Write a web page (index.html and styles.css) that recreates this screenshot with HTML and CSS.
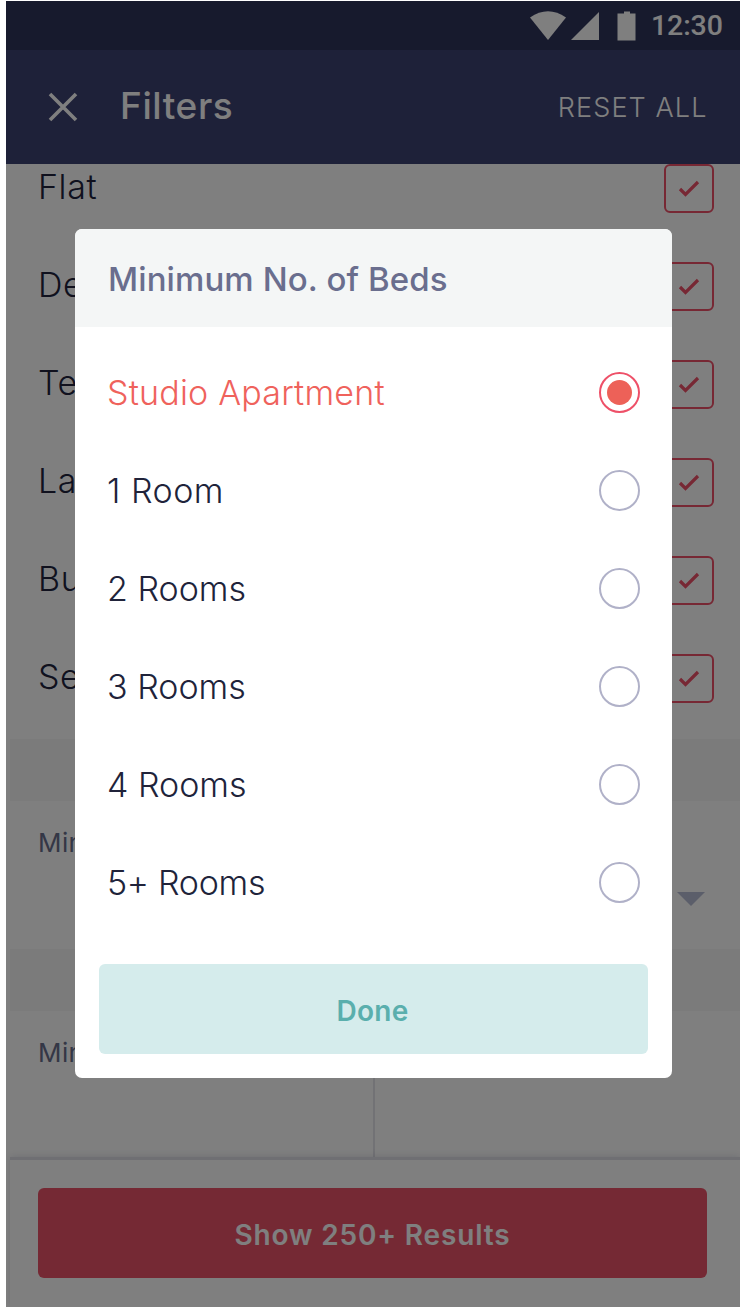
FILE: index.html
```html
<!DOCTYPE html>
<html lang="en">
<head>
<meta charset="utf-8">
<title>Filters</title>
<link rel="stylesheet" href="styles.css">
</head>
<body>
<div class="screen">
  <div class="status">
    <svg class="status-icons" width="108" height="30" viewBox="0 0 108 30">
      <path d="M0 6.5Q18-6 36 6.5L18 29Z"/>
      <path d="M69 1V29H41Z"/>
      <path d="M94 .5h6v2h5.5V29.500H87.500V2.500H94Z"/>
    </svg>
    <span class="clock">12:30</span>
  </div>
  <header class="appbar">
    <svg class="close" width="30" height="30" viewBox="0 0 30 30"><path d="M2 2L28 28M28 2L2 28"/></svg>
    <h1 class="title">Filters</h1>
    <span class="reset">RESET ALL</span>
  </header>
  <div class="types">
    <div class="type"><span>Flat</span><i class="check"><svg width="22" height="18" viewBox="0 0 22 18"><path d="M2 9L7.5 14.5L20 2"/></svg></i></div>
    <div class="type"><span>De</span><i class="check"><svg width="22" height="18" viewBox="0 0 22 18"><path d="M2 9L7.5 14.5L20 2"/></svg></i></div>
    <div class="type"><span>Te</span><i class="check"><svg width="22" height="18" viewBox="0 0 22 18"><path d="M2 9L7.5 14.5L20 2"/></svg></i></div>
    <div class="type"><span>La</span><i class="check"><svg width="22" height="18" viewBox="0 0 22 18"><path d="M2 9L7.5 14.5L20 2"/></svg></i></div>
    <div class="type"><span>Bu</span><i class="check"><svg width="22" height="18" viewBox="0 0 22 18"><path d="M2 9L7.5 14.5L20 2"/></svg></i></div>
    <div class="type"><span>Se</span><i class="check"><svg width="22" height="18" viewBox="0 0 22 18"><path d="M2 9L7.5 14.5L20 2"/></svg></i></div>
  </div>
  <div class="band"></div>
  <div class="field"><span class="label">Min</span><svg class="caret" width="28" height="14" viewBox="0 0 28 14"><path d="M0 0H28L14 14Z"/></svg></div>
  <div class="band"></div>
  <div class="pair"><div class="cell"><span class="label">Min</span></div><div class="cell"></div></div>
  <footer class="footer"><div class="show"><span>Show 250+ Results</span></div></footer>
  <div class="overlay"></div>
  <div class="modal">
    <h2 class="modal-title"><span>Minimum No. of Beds</span></h2>
    <div class="options">
      <div class="option selected"><span class="studio">Studio Apartment</span><i class="radio"></i></div>
      <div class="option"><span class="one">1 Room</span><i class="radio"></i></div>
      <div class="option"><span>2 Rooms</span><i class="radio"></i></div>
      <div class="option"><span>3 Rooms</span><i class="radio"></i></div>
      <div class="option"><span>4 Rooms</span><i class="radio"></i></div>
      <div class="option"><span class="five">5+ Rooms</span><i class="radio"></i></div>
    </div>
    <div class="done"><span>Done</span></div>
  </div>
</div>
</body>
</html>
```
FILE: styles.css
```css
* { box-sizing: border-box; }
body {
  margin: 0;
  padding: 1px 4.5px 0 6px;
  height: 1310px;
  overflow: hidden;
  background: #fff;
  font-family: Inter, "Liberation Sans", sans-serif;
}
svg { display: block; flex: none; }
span { white-space: nowrap; }
.screen {
  position: relative;
  display: flex;
  flex-direction: column;
  height: 1305.5px;
  background: #fff;
  overflow: hidden;
}
.status {
  flex: none;
  height: 49px;
  display: flex;
  align-items: center;
  background: #2e345a;
  padding-left: 524px;
}
.status-icons { fill: #fff; }
.clock {
  margin-left: 13px;
  font: 500 28.5px/48px Roboto, sans-serif;
  letter-spacing: -0.1px;
  color: #fff;
}
.appbar {
  flex: none;
  height: 114px;
  display: flex;
  align-items: center;
  padding: 0 32px 0 42px;
  background: #3c4272;
  color: #fff;
}
.close { stroke: #fff; stroke-width: 3.6; fill: none; }
.title {
  margin: -3px auto 0 42px;
  font-size: 37px;
  font-weight: 450;
  letter-spacing: 0.6px;
}
.reset { font-size: 27px; font-weight: 350; letter-spacing: 1.1px; }
.types { flex: none; height: 575px; overflow: hidden; }
.type {
  height: 98px;
  padding: 0 26px 0 32px;
  display: flex;
  justify-content: space-between;
  align-items: flex-start;
  font-size: 34px;
  font-weight: 300;
  line-height: 46px;
  letter-spacing: .6px;
  color: #20233d;
}
.check {
  width: 49.5px;
  height: 49px;
  border: 2px solid #ee5068;
  border-radius: 6px;
  display: flex;
  align-items: center;
  justify-content: center;
}
.check svg { fill: none; stroke: #ee5068; stroke-width: 3.2; }
.band { flex: none; height: 62px; margin-left: 4px; background: #f6f6f6; }
.field {
  flex: none;
  height: 148px;
  padding: 27px 35px 0 32px;
  display: flex;
  justify-content: space-between;
}
.label { font-size: 26px; line-height: 30px; color: #696e8c; font-weight: 400; letter-spacing: .4px; }
.caret { margin-top: 64px; fill: #b6bcd4; }
.pair { flex: none; height: 146px; display: flex; }
.cell { flex: 1; padding: 27px 32px 0; }
.cell:first-child { flex: 0 0 367px; }
.cell + .cell { border-left: 2px solid #e4e4ea; }
.footer {
  flex: 1;
  margin-left: 4px;
  padding: 28px 32.5px 0 28px;
  border-top: 3px solid #dedee6;
  box-shadow: 0 -1px 7px rgba(60, 66, 114, .15);
  background: #fff;
}
.show {
  height: 90px;
  border-radius: 6px;
  background: #ea5268;
  color: #fff;
  font-size: 28px;
  font-weight: 600;
  line-height: 94px;
  text-align: center;
  letter-spacing: .85px;
}
.overlay { position: absolute; inset: 0; background: rgba(0, 0, 0, .5); }
.modal {
  position: absolute;
  left: 69px;
  top: 228px;
  width: 597px;
  height: 849px;
  border-radius: 7px;
  background: #fff;
  overflow: hidden;
}
.modal-title {
  margin: 0;
  height: 98px;
  padding-left: 33px;
  background: #f4f6f6;
  color: #6a6e8e;
  font-size: 33px;
  font-weight: 500;
  line-height: 100px;
  letter-spacing: .1px;
}
.options { padding: 16.5px 32px 0 32px; }
.option {
  height: 98px;
  display: flex;
  justify-content: space-between;
  align-items: center;
  font-size: 34px;
  font-weight: 300;
  color: #20233a;
}
.studio { letter-spacing: .2px; }
.one { letter-spacing: .5px; }
.five { letter-spacing: -.3px; }
.radio {
  width: 41px;
  height: 41px;
  border: 2px solid #b0b1c8;
  border-radius: 50%;
}
.selected { color: #ef625c; }
.selected .radio {
  display: flex;
  align-items: center;
  justify-content: center;
  border-color: #ee5068;
}
.selected .radio::after {
  content: "";
  width: 25px;
  height: 25px;
  border-radius: 50%;
  background: #ed6158;
}
.done {
  margin: 32px 24px 0;
  height: 90px;
  border-radius: 6px;
  background: #d5ecec;
  color: #5aafad;
  font-size: 28px;
  font-weight: 600;
  line-height: 94px;
  text-align: center;
  letter-spacing: .3px;
}
.done span { margin-right: 2px; }
```
